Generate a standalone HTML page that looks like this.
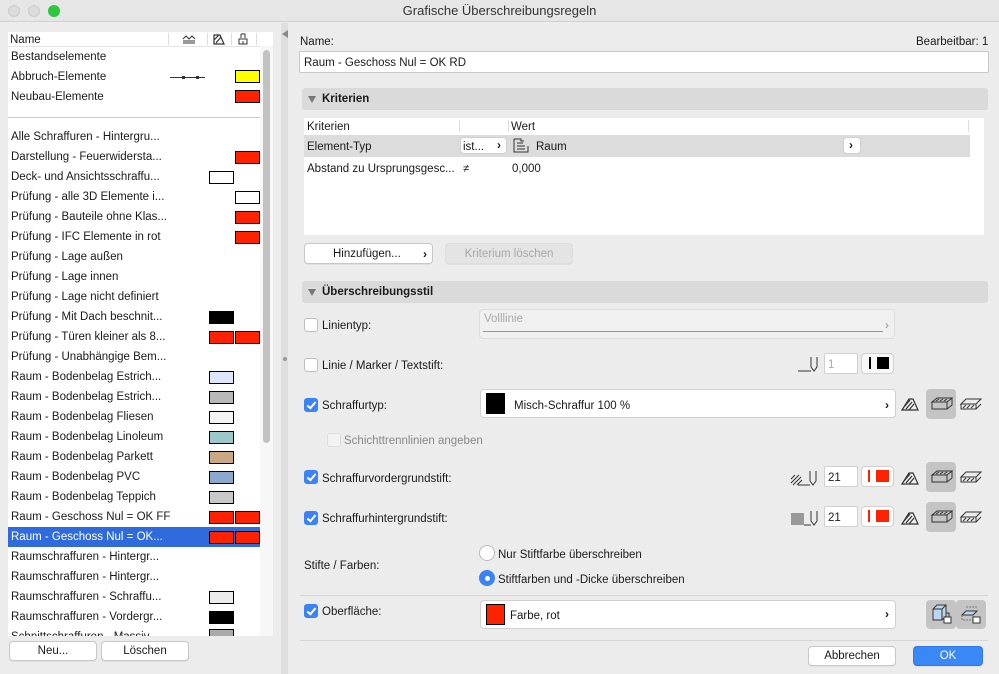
<!DOCTYPE html>
<html><head><meta charset="utf-8"><style>
*{box-sizing:border-box;margin:0;padding:0}
body{width:999px;height:674px;overflow:hidden;background:#ececec;font-family:"Liberation Sans",sans-serif;font-size:11.5px;color:#1a1a1a;position:relative}
.a{position:absolute}
.t{position:absolute;white-space:nowrap;line-height:14px}
.row{position:absolute;left:8px;width:252px;height:20px;line-height:21px;padding-left:3px;white-space:nowrap}
.sw{position:absolute;top:4px;width:25px;height:13px;border:1px solid #000}
.btn{position:absolute;background:#fff;border:1px solid #c8c8c8;border-radius:4px;text-align:center;line-height:19px;box-shadow:0 1px 0 rgba(0,0,0,.05)}
.hdr{position:absolute;left:302px;width:686px;height:22px;background:#dadada;border-radius:3px;font-weight:bold;line-height:22px;padding-left:20px}
.hdr:before{content:"";position:absolute;left:6px;top:8px;border-left:4px solid transparent;border-right:4px solid transparent;border-top:7px solid #777}
.cb{position:absolute;width:14px;height:14px;border:1px solid #bdbdbd;border-radius:3px;background:#fff}
.cb.on{background:#3b82f6;border-color:#3b82f6}
.cb.on:after{content:"";position:absolute;left:4px;top:1px;width:3px;height:7px;border:solid #fff;border-width:0 2px 2px 0;transform:rotate(40deg)}
.wb{position:absolute;background:#fff;border:1px solid #d0d0d0;border-radius:4px}
.chev{position:absolute;font-size:12px;font-weight:bold}
.ib{position:absolute;width:30px;height:30px;border-radius:4px;background:#c4c4c4}
</style></head><body>
<div class="a" style="left:0;top:0;width:999px;height:22px;background:#e6e6e6;border-bottom:1px solid #d0d0d0"></div>
<div class="a" style="left:8px;top:5px;width:12px;height:12px;border-radius:50%;background:#dcdcdc;border:1px solid #ccc"></div>
<div class="a" style="left:28px;top:5px;width:12px;height:12px;border-radius:50%;background:#dcdcdc;border:1px solid #ccc"></div>
<div class="a" style="left:48px;top:5px;width:12px;height:12px;border-radius:50%;background:#2bc840"></div>
<div class="t" style="left:0;width:999px;text-align:center;top:4px;font-size:13px;color:#333">Grafische Überschreibungsregeln</div>

<div class="a" style="left:8px;top:32px;width:265px;height:604px;background:#fff"></div>
<div class="a" style="left:260px;top:46px;width:13px;height:590px;background:#f7f7f7"></div>
<div class="a" style="left:263px;top:50px;width:7px;height:393px;background:#c2c2c2;border-radius:4px"></div>
<div class="a" style="left:8px;top:46px;width:252px;height:1px;background:#e4e4e4"></div>
<div class="t" style="left:10px;top:33px">Name</div>
<div class="a" style="left:168px;top:33px;width:1px;height:12px;background:#ddd"></div>
<div class="a" style="left:207px;top:33px;width:1px;height:12px;background:#ddd"></div>
<div class="a" style="left:231px;top:33px;width:1px;height:12px;background:#ddd"></div>
<div class="a" style="left:256px;top:33px;width:1px;height:12px;background:#ddd"></div>
<svg class="a" style="left:182px;top:34px" width="14" height="10"><path d="M1 5 L4 2 L7 5 L10 2 L13 5 M1 7 H13 M1 9 H13" stroke="#333" fill="none"/></svg>
<svg class="a" style="left:213px;top:34px" width="12" height="11"><path d="M1 1 H7 L11 10 H1 Z M1 6 L6 1 M3 9 L8 3" stroke="#333" fill="none" stroke-width="1.2"/></svg>
<svg class="a" style="left:238px;top:33px" width="10" height="12"><path d="M3 1 H7 V5 M3 1 V5 M1 6 H9 V11 H1 Z M5 8 V11" stroke="#333" fill="none"/></svg>

<div class="row" style="top:47px">Bestandselemente</div>
<div class="row" style="top:67px">Abbruch-Elemente</div>
<div class="a" style="left:170px;top:77px;width:35px;height:1px;background:#333"></div>
<div class="a" style="left:182px;top:76px;width:3px;height:3px;background:#333"></div>
<div class="a" style="left:196px;top:76px;width:3px;height:3px;background:#333"></div>
<div class="sw" style="left:235px;top:70px;background:#ffff00"></div>
<div class="row" style="top:87px">Neubau-Elemente</div>
<div class="sw" style="left:235px;top:90px;background:#ff2200"></div>
<div class="a" style="left:8px;top:117px;width:252px;height:1px;background:#ccc"></div>

<div class="row" style="top:127px">Alle Schraffuren - Hintergru...</div>
<div class="row" style="top:147px">Darstellung - Feuerwidersta...</div><div class="sw" style="left:235px;top:151px;background:#ff2200"></div>
<div class="row" style="top:167px">Deck- und Ansichtsschraffu...</div><div class="sw" style="left:209px;top:171px;background:#fff"></div>
<div class="row" style="top:187px">Prüfung - alle 3D Elemente i...</div><div class="sw" style="left:235px;top:191px;background:#fff"></div>
<div class="row" style="top:207px">Prüfung - Bauteile ohne Klas...</div><div class="sw" style="left:235px;top:211px;background:#ff2200"></div>
<div class="row" style="top:227px">Prüfung - IFC Elemente in rot</div><div class="sw" style="left:235px;top:231px;background:#ff2200"></div>
<div class="row" style="top:247px">Prüfung - Lage außen</div>
<div class="row" style="top:267px">Prüfung - Lage innen</div>
<div class="row" style="top:287px">Prüfung - Lage nicht definiert</div>
<div class="row" style="top:307px">Prüfung - Mit Dach beschnit...</div><div class="sw" style="left:209px;top:311px;background:#000"></div>
<div class="row" style="top:327px">Prüfung - Türen kleiner als 8...</div><div class="sw" style="left:209px;top:331px;background:#ff2200"></div><div class="sw" style="left:235px;top:331px;background:#ff2200"></div>
<div class="row" style="top:347px">Prüfung - Unabhängige Bem...</div>
<div class="row" style="top:367px">Raum - Bodenbelag Estrich...</div><div class="sw" style="left:209px;top:371px;background:#dde6fb"></div>
<div class="row" style="top:387px">Raum - Bodenbelag Estrich...</div><div class="sw" style="left:209px;top:391px;background:#b8b8b8"></div>
<div class="row" style="top:407px">Raum - Bodenbelag Fliesen</div><div class="sw" style="left:209px;top:411px;background:#f4f4f4"></div>
<div class="row" style="top:427px">Raum - Bodenbelag Linoleum</div><div class="sw" style="left:209px;top:431px;background:#9cc8cc"></div>
<div class="row" style="top:447px">Raum - Bodenbelag Parkett</div><div class="sw" style="left:209px;top:451px;background:#c9a883"></div>
<div class="row" style="top:467px">Raum - Bodenbelag PVC</div><div class="sw" style="left:209px;top:471px;background:#8aa9cc"></div>
<div class="row" style="top:487px">Raum - Bodenbelag Teppich</div><div class="sw" style="left:209px;top:491px;background:#c8c8c8"></div>
<div class="row" style="top:507px">Raum - Geschoss Nul = OK FF</div><div class="sw" style="left:209px;top:511px;background:#ff2200"></div><div class="sw" style="left:235px;top:511px;background:#ff2200"></div>
<div class="row" style="top:527px;background:#2f6bdc;color:#fff">Raum - Geschoss Nul = OK...</div><div class="sw" style="left:209px;top:531px;background:#ff2200"></div><div class="sw" style="left:235px;top:531px;background:#ff2200"></div>
<div class="row" style="top:547px">Raumschraffuren - Hintergr...</div>
<div class="row" style="top:567px">Raumschraffuren - Hintergr...</div>
<div class="row" style="top:587px">Raumschraffuren - Schraffu...</div><div class="sw" style="left:209px;top:591px;background:#ececec"></div>
<div class="row" style="top:607px">Raumschraffuren - Vordergr...</div><div class="sw" style="left:209px;top:611px;background:#000"></div>
<div class="a" style="left:8px;top:627px;width:252px;height:9px;overflow:hidden"><div class="row" style="left:0;top:0">Schnittschraffuren - Massiv...</div><div class="sw" style="left:201px;top:2px;background:#aaa"></div></div>
<div class="btn" style="left:9px;top:641px;width:88px;height:20px">Neu...</div>
<div class="btn" style="left:101px;top:641px;width:88px;height:20px">Löschen</div>

<div class="a" style="left:281px;top:23px;width:7px;height:651px;background:#dedede"></div>
<div class="a" style="left:282px;top:30px;border-top:4px solid transparent;border-bottom:4px solid transparent;border-right:6px solid #888"></div>
<div class="a" style="left:283px;top:357px;width:4px;height:4px;border-radius:50%;background:#999"></div>

<div class="t" style="left:300px;top:35px">Name:</div>
<div class="t" style="left:916px;top:35px">Bearbeitbar: 1</div>
<div class="wb" style="left:299px;top:51px;width:690px;height:22px;border-radius:2px;border-color:#c8c8c8"></div>
<div class="t" style="left:304px;top:56px">Raum - Geschoss Nul = OK RD</div>

<div class="hdr" style="top:88px">Kriterien</div>
<div class="a" style="left:304px;top:118px;width:680px;height:117px;background:#fff"></div>
<div class="t" style="left:307px;top:120px">Kriterien</div>
<div class="t" style="left:511px;top:120px">Wert</div>
<div class="a" style="left:459px;top:120px;width:1px;height:12px;background:#ddd"></div>
<div class="a" style="left:508px;top:120px;width:1px;height:12px;background:#ddd"></div>
<div class="a" style="left:968px;top:120px;width:1px;height:12px;background:#ddd"></div>
<div class="a" style="left:304px;top:135px;width:666px;height:22px;background:#dcdcdc"></div>
<div class="t" style="left:307px;top:140px">Element-Typ</div>
<div class="wb" style="left:460px;top:137px;width:47px;height:17px"></div>
<div class="t" style="left:463px;top:140px">ist...</div><div class="chev" style="left:497px;top:138px">›</div>
<svg class="a" style="left:513px;top:138px" width="16" height="15"><path d="M1 1 H8 V3 H11 M1 1 V14 H15 V8 M4 5 H10 M4 8 H12 M4 11 H12" stroke="#333" fill="none"/></svg>
<div class="t" style="left:536px;top:140px">Raum</div>
<div class="wb" style="left:843px;top:137px;width:18px;height:17px"></div><div class="chev" style="left:849px;top:138px">›</div>
<div class="t" style="left:307px;top:162px">Abstand zu Ursprungsgesc...</div>
<div class="t" style="left:463px;top:162px">≠</div>
<div class="t" style="left:512px;top:162px">0,000</div>
<div class="btn" style="left:304px;top:243px;width:129px;height:21px;text-align:left;padding-left:28px;line-height:20px">Hinzufügen...</div><div class="chev" style="left:423px;top:247px">›</div>
<div class="btn" style="left:445px;top:243px;width:128px;height:21px;background:#e4e4e4;border-color:#ddd;color:#a8a8a8;line-height:20px">Kriterium löschen</div>

<div class="hdr" style="top:281px">Überschreibungsstil</div>
<div class="cb" style="left:304px;top:318px"></div><div class="t" style="left:322px;top:319px">Linientyp:</div>
<div class="a" style="left:479px;top:309px;width:416px;height:30px;background:#f0f0f0;border:1px solid #ddd;border-radius:4px"></div>
<div class="t" style="left:484px;top:312px;color:#aaa">Volllinie</div>
<div class="a" style="left:483px;top:331px;width:400px;height:1px;background:#999"></div>
<div class="chev" style="left:885px;top:318px;color:#aaa">›</div>

<div class="cb" style="left:304px;top:358px"></div><div class="t" style="left:322px;top:359px">Linie / Marker / Textstift:</div>
<svg class="a" style="left:797px;top:355px" width="24" height="18"><path d="M1 16 H14 M14 2 V12 L17 16 L20 12 V2" stroke="#333" fill="none"/></svg>
<div class="wb" style="left:824px;top:353px;width:34px;height:21px;border-radius:2px"></div><div class="t" style="left:828px;top:358px;color:#aaa">1</div>
<div class="wb" style="left:861px;top:353px;width:33px;height:21px;background:#f7f7f7"></div>
<div class="a" style="left:869px;top:357px;width:2px;height:12px;background:#000"></div><div class="a" style="left:877px;top:357px;width:12px;height:12px;background:#000"></div>

<div class="cb on" style="left:304px;top:398px"></div><div class="t" style="left:322px;top:399px">Schraffurtyp:</div>
<div class="wb" style="left:480px;top:389px;width:416px;height:29px"></div>
<div class="a" style="left:486px;top:393px;width:19px;height:21px;background:#000"></div>
<div class="t" style="left:514px;top:399px">Misch-Schraffur 100 %</div><div class="chev" style="left:885px;top:398px">›</div>

<div class="cb" style="left:327px;top:433px;background:#f2f2f2;border-color:#ddd"></div><div class="t" style="left:344px;top:434px;color:#888">Schichttrennlinien angeben</div>

<div class="cb on" style="left:304px;top:470px"></div><div class="t" style="left:322px;top:472px">Schraffurvordergrundstift:</div>
<svg class="a" style="left:790px;top:469px" width="32" height="18"><path d="M1 10 L5 6 M1 14 L9 6 M3 16 L11 8 M7 16 L12 11 M8 16 H20 M20 2 V12 L23 16 L26 12 V2" stroke="#333" fill="none"/></svg>
<div class="wb" style="left:824px;top:466px;width:34px;height:21px;border-radius:2px"></div><div class="t" style="left:828px;top:471px">21</div>
<div class="wb" style="left:861px;top:466px;width:33px;height:21px"></div>
<div class="a" style="left:868px;top:470px;width:2px;height:12px;background:#ff2200"></div><div class="a" style="left:876px;top:470px;width:13px;height:12px;background:#ff2200"></div>

<div class="cb on" style="left:304px;top:511px"></div><div class="t" style="left:322px;top:512px">Schraffurhintergrundstift:</div>
<div class="a" style="left:791px;top:513px;width:13px;height:12px;background:#999"></div>
<svg class="a" style="left:803px;top:509px" width="20" height="18"><path d="M1 16 H8 M8 2 V12 L11 16 L14 12 V2" stroke="#333" fill="none"/></svg>
<div class="wb" style="left:824px;top:506px;width:34px;height:21px;border-radius:2px"></div><div class="t" style="left:828px;top:511px">21</div>
<div class="wb" style="left:861px;top:506px;width:33px;height:21px"></div>
<div class="a" style="left:868px;top:510px;width:2px;height:12px;background:#ff2200"></div><div class="a" style="left:876px;top:510px;width:13px;height:12px;background:#ff2200"></div>

<div class="ib" style="left:926px;top:389px"></div><div class="ib" style="left:926px;top:462px"></div><div class="ib" style="left:926px;top:502px"></div>
<svg class="a" style="left:900px;top:396px" width="20" height="16"><path d="M2 14 L9 3 L13 3 L18 14 Z M4 11 L10 4 M6 13 L12 6 M9 14 L14 8" stroke="#333" fill="none" stroke-width="1.2"/></svg>
<svg class="a" style="left:930px;top:397px" width="24" height="14"><path d="M2 5 L7 1 H22 L17 5 Z M2 5 V12 H17 V5 M17 12 L22 8 V1 M6 4 L9 2 M10 4 L13 2 M14 4 L17 2" stroke="#333" fill="none"/></svg>
<svg class="a" style="left:959px;top:397px" width="24" height="14"><path d="M2 7 L7 2 H22 L17 7 Z M2 7 V12 H17 V7 M17 12 L22 7 M4 11 L7 8 M8 11 L11 8 M12 11 L15 8" stroke="#333" fill="none"/></svg>
<svg class="a" style="left:900px;top:470px" width="20" height="16"><path d="M2 14 L9 3 L13 3 L18 14 Z M4 11 L10 4 M6 13 L12 6 M9 14 L14 8" stroke="#333" fill="none" stroke-width="1.2"/></svg>
<svg class="a" style="left:930px;top:470px" width="24" height="14"><path d="M2 5 L7 1 H22 L17 5 Z M2 5 V12 H17 V5 M17 12 L22 8 V1 M6 4 L9 2 M10 4 L13 2 M14 4 L17 2" stroke="#333" fill="none"/></svg>
<svg class="a" style="left:959px;top:470px" width="24" height="14"><path d="M2 7 L7 2 H22 L17 7 Z M2 7 V12 H17 V7 M17 12 L22 7 M4 11 L7 8 M8 11 L11 8 M12 11 L15 8" stroke="#333" fill="none"/></svg>
<svg class="a" style="left:900px;top:510px" width="20" height="16"><path d="M2 14 L9 3 L13 3 L18 14 Z M4 11 L10 4 M6 13 L12 6 M9 14 L14 8" stroke="#333" fill="none" stroke-width="1.2"/></svg>
<svg class="a" style="left:930px;top:510px" width="24" height="14"><path d="M2 5 L7 1 H22 L17 5 Z M2 5 V12 H17 V5 M17 12 L22 8 V1 M6 4 L9 2 M10 4 L13 2 M14 4 L17 2" stroke="#333" fill="none"/></svg>
<svg class="a" style="left:959px;top:510px" width="24" height="14"><path d="M2 7 L7 2 H22 L17 7 Z M2 7 V12 H17 V7 M17 12 L22 7 M4 11 L7 8 M8 11 L11 8 M12 11 L15 8" stroke="#333" fill="none"/></svg>

<div class="t" style="left:304px;top:559px">Stifte / Farben:</div>
<div class="a" style="left:479px;top:545px;width:16px;height:16px;border-radius:50%;background:#fff;border:1px solid #bbb"></div>
<div class="t" style="left:498px;top:548px">Nur Stiftfarbe überschreiben</div>
<div class="a" style="left:479px;top:570px;width:16px;height:16px;border-radius:50%;background:#3b82f6"></div>
<div class="a" style="left:485px;top:576px;width:5px;height:5px;border-radius:50%;background:#fff"></div>
<div class="t" style="left:498px;top:573px">Stiftfarben und -Dicke überschreiben</div>
<div class="a" style="left:300px;top:595px;width:688px;height:1px;background:#d6d6d6"></div>

<div class="cb on" style="left:304px;top:604px"></div><div class="t" style="left:322px;top:605px">Oberfläche:</div>
<div class="wb" style="left:480px;top:600px;width:416px;height:29px"></div>
<div class="a" style="left:486px;top:604px;width:19px;height:21px;background:#ff2200;border:1px solid #000"></div>
<div class="t" style="left:510px;top:609px">Farbe, rot</div><div class="chev" style="left:885px;top:607px">›</div>
<div class="ib" style="left:926px;top:600px;height:29px"></div><div class="ib" style="left:956px;top:600px;height:29px"></div>
<svg class="a" style="left:931px;top:603px" width="22" height="24"><path d="M2 6 L6 2 H15 V13 L11 17 H2 Z" fill="#bcd6f0" stroke="#333"/><path d="M2 6 H11 V17 M11 6 L15 2" stroke="#333" fill="none"/><rect x="13" y="14" width="7" height="6" fill="#fff" stroke="#333"/><path d="M15 14 V10 H18 V14" stroke="#333" fill="none"/></svg>
<svg class="a" style="left:960px;top:603px" width="22" height="24"><path d="M2 12 L6 8 H17 L13 12 Z" fill="#bcd6f0" stroke="#333"/><path d="M2 12 V17 H13 V12 M6 4 H17" stroke="#777" fill="none" stroke-dasharray="2 1"/><rect x="13" y="14" width="7" height="6" fill="#fff" stroke="#333"/></svg>

<div class="a" style="left:300px;top:640px;width:688px;height:1px;background:#d6d6d6"></div>
<div class="btn" style="left:808px;top:646px;width:88px;height:20px">Abbrechen</div>
<div class="btn" style="left:913px;top:646px;width:70px;height:20px;background:#3a87f7;border-color:#2f78e8;color:#fff">OK</div>
</body></html>
